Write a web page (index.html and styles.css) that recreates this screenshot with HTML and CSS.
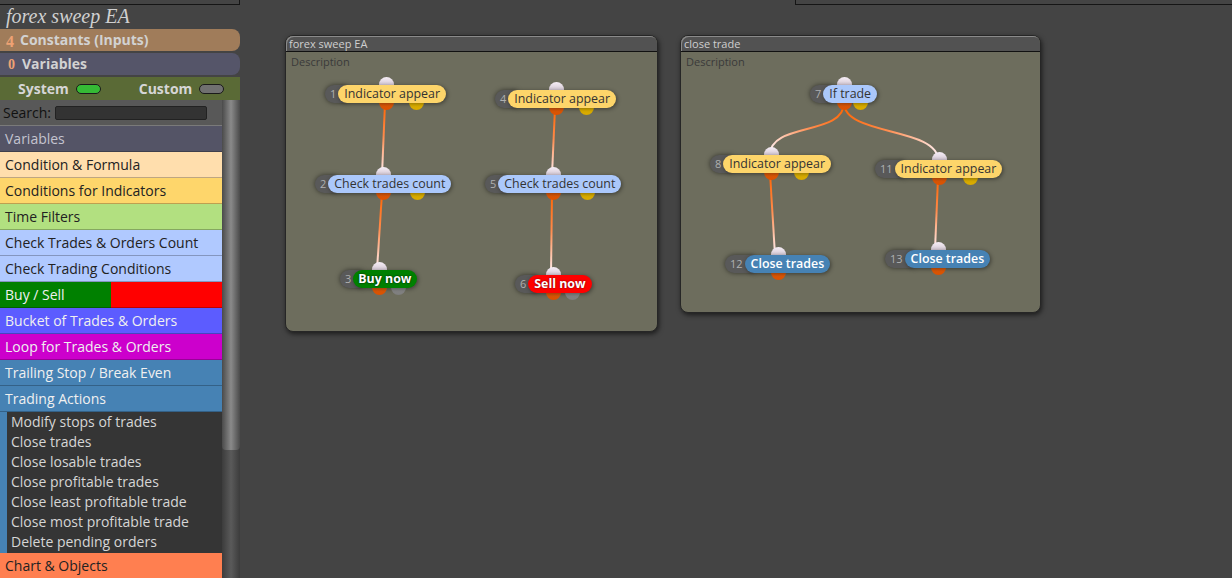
FILE: index.html
```html
<!DOCTYPE html>
<html lang="en">
<head>
    <meta charset="UTF-8">
    <meta name="viewport" content="width=device-width, initial-scale=1.0">
    <title>forex sweep EA</title>
    <link rel="stylesheet" href="styles.css">
</head>

<body>
    <!-- Left block library -->
    <div class="sidebar">
        <div class="top-box"></div>
        <div class="project-title">forex sweep EA</div>
        <div class="group constants"><span class="count">4</span>Constants (Inputs)</div>
        <div class="group variables"><span class="count">0</span>Variables</div>
        <div class="switches">
            <span class="sw-label">System</span><span class="switch on"></span>
            <span class="sw-label custom">Custom</span><span class="switch"></span>
        </div>
        <div class="library">
            <div class="blocks">
                <div class="search">Search: <input type="text" class="search-box"></div>
                <div class="cat cat-vars">Variables</div>
                <div class="cat cat-formula">Condition &amp; Formula</div>
                <div class="cat cat-indicators">Conditions for Indicators</div>
                <div class="cat cat-time">Time Filters</div>
                <div class="cat cat-check">Check Trades &amp; Orders Count</div>
                <div class="cat cat-check">Check Trading Conditions</div>
                <div class="cat cat-buysell">Buy / Sell</div>
                <div class="cat cat-bucket">Bucket of Trades &amp; Orders</div>
                <div class="cat cat-loop">Loop for Trades &amp; Orders</div>
                <div class="cat cat-steel">Trailing Stop / Break Even</div>
                <div class="cat cat-steel">Trading Actions</div>
                <div class="sub">
                    <div class="sub-item">Modify stops of trades</div>
                    <div class="sub-item">Close trades</div>
                    <div class="sub-item">Close losable trades</div>
                    <div class="sub-item">Close profitable trades</div>
                    <div class="sub-item">Close least profitable trade</div>
                    <div class="sub-item">Close most profitable trade</div>
                    <div class="sub-item">Delete pending orders</div>
                </div>
                <div class="cat cat-chart">Chart &amp; Objects</div>
            </div>
            <div class="scrollbar"><div class="thumb"></div></div>
        </div>
    </div>

    <!-- Workspace -->
    <div class="main">
        <div class="top-strip"><div class="top-box right"></div></div>
        <div class="canvas">

            <div class="window w1">
                <div class="win-title">forex sweep EA</div>
                <div class="desc">Description</div>
                <svg class="links" width="371" height="295">
                    <defs>
                        <linearGradient id="g1" gradientUnits="userSpaceOnUse" x1="99" y1="67" x2="96" y2="139">
                            <stop offset="0" stop-color="#ff6400"/><stop offset="0.45" stop-color="#ff8a4a"/><stop offset="1" stop-color="#fff2f6"/>
                        </linearGradient>
                        <linearGradient id="g2" gradientUnits="userSpaceOnUse" x1="96" y1="157" x2="91" y2="234">
                            <stop offset="0" stop-color="#ff6400"/><stop offset="0.45" stop-color="#ff8a4a"/><stop offset="1" stop-color="#fff2f6"/>
                        </linearGradient>
                        <linearGradient id="g3" gradientUnits="userSpaceOnUse" x1="269" y1="72" x2="266" y2="139">
                            <stop offset="0" stop-color="#ff6400"/><stop offset="0.45" stop-color="#ff8a4a"/><stop offset="1" stop-color="#fff2f6"/>
                        </linearGradient>
                        <linearGradient id="g4" gradientUnits="userSpaceOnUse" x1="266" y1="157" x2="265" y2="239">
                            <stop offset="0" stop-color="#ff6400"/><stop offset="0.45" stop-color="#ff8a4a"/><stop offset="1" stop-color="#fff2f6"/>
                        </linearGradient>
                    </defs>
                    <path d="M99 67 L96 139" stroke="url(#g1)" stroke-width="2" fill="none"/>
                    <path d="M96 157 L91 234" stroke="url(#g2)" stroke-width="2" fill="none"/>
                    <path d="M269 72 L266 139" stroke="url(#g3)" stroke-width="2" fill="none"/>
                    <path d="M266 157 L265 239" stroke="url(#g4)" stroke-width="2" fill="none"/>
                </svg>

                <div class="node" style="left: 39px; top: 49px;">
                    <span class="pin in"></span><span class="pin out"></span><span class="pin out alt yellow"></span>
                    <span class="num">1</span><span class="label indicator">Indicator appear</span>
                </div>
                <div class="node" style="left: 29px; top: 139px;">
                    <span class="pin in"></span><span class="pin out"></span><span class="pin out alt yellow"></span>
                    <span class="num">2</span><span class="label check">Check trades count</span>
                </div>
                <div class="node" style="left: 54px; top: 234px;">
                    <span class="pin in"></span><span class="pin out"></span><span class="pin out alt gray"></span>
                    <span class="num">3</span><span class="label buy">Buy now</span>
                </div>
                <div class="node" style="left: 209px; top: 54px;">
                    <span class="pin in"></span><span class="pin out"></span><span class="pin out alt yellow"></span>
                    <span class="num">4</span><span class="label indicator">Indicator appear</span>
                </div>
                <div class="node" style="left: 199px; top: 139px;">
                    <span class="pin in"></span><span class="pin out"></span><span class="pin out alt yellow"></span>
                    <span class="num">5</span><span class="label check">Check trades count</span>
                </div>
                <div class="node" style="left: 229px; top: 239px;">
                    <span class="pin in"></span><span class="pin out"></span><span class="pin out alt gray"></span>
                    <span class="num">6</span><span class="label sell">Sell now</span>
                </div>
            </div>

            <div class="window w2">
                <div class="win-title">close trade</div>
                <div class="desc">Description</div>
                <svg class="links" width="359" height="276">
                    <defs>
                        <linearGradient id="h1" gradientUnits="userSpaceOnUse" x1="163" y1="67" x2="89" y2="119">
                            <stop offset="0" stop-color="#ff6400"/><stop offset="0.45" stop-color="#ff8a4a"/><stop offset="1" stop-color="#fff2f6"/>
                        </linearGradient>
                        <linearGradient id="h2" gradientUnits="userSpaceOnUse" x1="163" y1="67" x2="257" y2="124">
                            <stop offset="0" stop-color="#ff6400"/><stop offset="0.45" stop-color="#ff8a4a"/><stop offset="1" stop-color="#fff2f6"/>
                        </linearGradient>
                        <linearGradient id="h3" gradientUnits="userSpaceOnUse" x1="89" y1="137" x2="94" y2="219">
                            <stop offset="0" stop-color="#ff6400"/><stop offset="0.45" stop-color="#ff8a4a"/><stop offset="1" stop-color="#fff2f6"/>
                        </linearGradient>
                        <linearGradient id="h4" gradientUnits="userSpaceOnUse" x1="257" y1="142" x2="254" y2="214">
                            <stop offset="0" stop-color="#ff6400"/><stop offset="0.45" stop-color="#ff8a4a"/><stop offset="1" stop-color="#fff2f6"/>
                        </linearGradient>
                    </defs>
                    <path d="M163 67 C163 100 89 86 89 119" stroke="url(#h1)" stroke-width="2" fill="none"/>
                    <path d="M163 67 C163 100 257 91 257 124" stroke="url(#h2)" stroke-width="2" fill="none"/>
                    <path d="M89 137 L94 219" stroke="url(#h3)" stroke-width="2" fill="none"/>
                    <path d="M257 142 L254 214" stroke="url(#h4)" stroke-width="2" fill="none"/>
                </svg>

                <div class="node" style="left: 129px; top: 49px;">
                    <span class="pin in"></span><span class="pin out"></span><span class="pin out alt yellow"></span>
                    <span class="num">7</span><span class="label check">If trade</span>
                </div>
                <div class="node" style="left: 29px; top: 119px;">
                    <span class="pin in"></span><span class="pin out"></span><span class="pin out alt yellow"></span>
                    <span class="num">8</span><span class="label indicator">Indicator appear</span>
                </div>
                <div class="node" style="left: 194px; top: 124px;">
                    <span class="pin in"></span><span class="pin out"></span><span class="pin out alt yellow"></span>
                    <span class="num">11</span><span class="label indicator">Indicator appear</span>
                </div>
                <div class="node" style="left: 44px; top: 219px;">
                    <span class="pin in"></span><span class="pin out"></span>
                    <span class="num">12</span><span class="label close">Close trades</span>
                </div>
                <div class="node" style="left: 204px; top: 214px;">
                    <span class="pin in"></span><span class="pin out"></span>
                    <span class="num">13</span><span class="label close">Close trades</span>
                </div>
            </div>

        </div>
    </div>
</body>
</html>
```

FILE: styles.css
```css
/* General Reset */
* {
    margin: 0;
    padding: 0;
    box-sizing: border-box;
}

body {
    font-family: 'Open Sans', 'Noto Sans', sans-serif;
    background-color: #444;
    color: #ddd;
    display: flex;
    height: 578px;
    overflow: hidden;
}

/* Sidebar */
.sidebar {
    width: 240px;
    flex-shrink: 0;
    display: flex;
    flex-direction: column;
}

.top-box {
    height: 5px;
    border-right: 1px solid #151515;
    border-bottom: 1px solid #151515;
}

.top-box.right {
    margin-left: 555px;
    border-right: none;
    border-left: 1px solid #151515;
}

.project-title {
    height: 24px;
    padding-left: 6px;
    font-family: 'Liberation Serif', serif;
    font-style: italic;
    font-size: 20px;
    line-height: 22px;
    color: #d0d0d0;
}

.group {
    height: 22px;
    margin-bottom: 2px;
    border-radius: 0 8px 8px 0;
    font-size: 14px;
    font-weight: bold;
    line-height: 22px;
    color: #d2d2d2;
    padding-left: 6px;
}

.count {
    font-family: 'Liberation Serif', serif;
    font-size: 16px;
    color: #eea274;
    margin-right: 6px;
    position: relative;
    top: 2px;
}

.constants {
    background-color: #a07c5a;
}

.variables {
    background-color: #555569;
}

.variables .count {
    font-size: 14px;
    top: 0;
    margin-right: 7px;
    margin-left: 2px;
}

.switches {
    height: 23px;
    background-color: #5a6a36;
    display: flex;
    align-items: center;
    padding-left: 18px;
    font-size: 14px;
    font-weight: bold;
    color: #d6d6d6;
}

.switch {
    width: 25px;
    height: 10px;
    border-radius: 5px;
    border: 1px solid #1a1a1a;
    background-color: #707070;
    margin-left: 7px;
}

.switch.on {
    background-color: #35bb35;
}

.sw-label.custom {
    margin-left: 38px;
}

/* Block library list */
.library {
    flex: 1;
    display: flex;
    overflow: hidden;
}

.blocks {
    width: 222px;
    font-size: 14px;
}

.search {
    height: 26px;
    background-color: #585858;
    border-bottom: 1px solid #7a7a7a;
    color: #111;
    padding-left: 3px;
    line-height: 25px;
    display: flex;
    align-items: center;
}

.search-box {
    width: 152px;
    height: 14px;
    margin-left: 4px;
    background-color: #333;
    border: 1px solid #222;
    border-radius: 2px;
}

.cat {
    height: 26px;
    line-height: 25px;
    padding-left: 5px;
    border-bottom: 1px solid rgba(0, 0, 0, 0.25);
    color: #222;
}

.cat-vars {
    background-color: #545466;
    color: #c4c4d0;
}

.cat-formula {
    background-color: #ffdead;
}

.cat-indicators {
    background-color: #fed66b;
}

.cat-time {
    background-color: #b2e080;
}

.cat-check {
    background-color: #b0c9ff;
}

.cat-buysell {
    background: linear-gradient(to right, #008000 50%, #ff0000 50%);
    color: #f0f0f0;
}

.cat-bucket {
    background-color: #5c5cff;
    color: #f0f0f0;
}

.cat-loop {
    background-color: #cc00cc;
    color: #f0f0f0;
}

.cat-steel {
    background-color: #4682b4;
    color: #f0f0f0;
}

.cat-chart {
    background-color: #ff7f50;
    color: #222;
}

.sub {
    border-left: 7px solid #4682b4;
    background-color: #353535;
    padding-bottom: 1px;
}

.sub-item {
    height: 20px;
    line-height: 19px;
    padding-left: 4px;
    color: #d6d6d6;
}

.scrollbar {
    width: 18px;
    background: linear-gradient(to right, #3c3c3c, #5a5a5a 50%, #3c3c3c);
}

.thumb {
    height: 350px;
    border-radius: 0 0 4px 4px;
    background: linear-gradient(to right, #4a4a4a, #8a8a8a 50%, #4a4a4a);
}

/* Workspace */
.main {
    flex: 1;
    display: flex;
    flex-direction: column;
}

.canvas {
    display: flex;
    align-items: flex-start;
    gap: 22px;
    padding: 30px 0 0 45px;
}

.window {
    position: relative;
    border: 1px solid #262626;
    border-radius: 8px;
    background-color: #6d6d5d;
    box-shadow: 1px 2px 5px rgba(0, 0, 0, 0.6);
    font-size: 11px;
}

.w1 {
    width: 373px;
    height: 297px;
}

.w2 {
    width: 361px;
    height: 278px;
}

.win-title {
    height: 16px;
    line-height: 15px;
    padding-left: 3px;
    background-color: #525252;
    border-bottom: 1px solid #111;
    border-radius: 7px 7px 0 0;
    box-shadow: inset 1px 1px 0 #8a8a8a;
    color: #cfcfcf;
}

.desc {
    padding: 2px 5px;
    line-height: 15px;
    color: #3a3a3a;
}

.links {
    position: absolute;
    left: 0;
    top: 0;
}

/* Diagram nodes */
.node {
    position: absolute;
    display: flex;
    height: 18px;
    line-height: 18px;
    font-size: 12.4px;
    white-space: nowrap;
}

.num {
    position: relative;
    z-index: 1;
    padding: 0 11px 0 5px;
    margin-right: -9px;
    border-radius: 9px 0 0 9px;
    background-color: #595959;
    color: #b0b0b0;
    font-size: 11px;
    box-shadow: 0 0 5px rgba(0, 0, 0, 0.55);
}

.label {
    position: relative;
    z-index: 2;
    padding: 0 6px;
    border-radius: 9px;
    color: #333;
    box-shadow: 1px 1px 4px rgba(0, 0, 0, 0.45);
}

.indicator {
    background-color: #fdd56a;
}

.check {
    background-color: #abc8fb;
}

.buy {
    background-color: #008000;
    color: #fff;
    font-weight: bold;
    text-shadow: 0 0 2px #000;
    padding: 0 6px 0 5px;
}

.sell {
    background-color: #ff0000;
    color: #fff;
    font-weight: bold;
    text-shadow: 0 0 2px #600;
}

.close {
    background-color: #4682b4;
    color: #fff;
    font-weight: 600;
}

.pin {
    position: absolute;
    left: 50%;
    width: 15px;
    height: 15px;
    margin-left: -7px;
    border-radius: 50%;
    z-index: 0;
}

.pin.in {
    top: -8px;
    background: linear-gradient(#f6eef6, #b9a9b9);
}

.pin.out {
    bottom: -7px;
    background: linear-gradient(#ff7518, #d85000);
}

.pin.alt {
    left: 75%;
}

.pin.yellow {
    background: linear-gradient(#ffd000, #d6a800);
}

.pin.gray {
    background: linear-gradient(#a8a8a8, #7c7c7c);
}
```
